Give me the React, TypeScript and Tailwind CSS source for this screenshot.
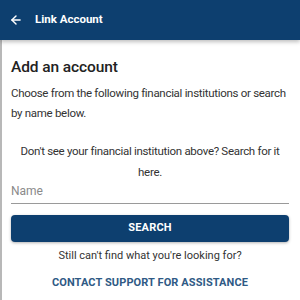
import { ArrowLeft } from 'lucide-react';

export default function App() {
    return (
        <div className="w-[300px] h-[300px] overflow-hidden bg-white flex flex-col" style={{ fontFamily: 'Roboto, "Liberation Sans", sans-serif' }}>
            <div className="h-[40px] shrink-0 bg-[#0d3f6f] flex items-center pl-[9px] gap-[12px] shadow-[0_2px_4px_rgba(0,0,0,0.25)] relative z-10">
                <ArrowLeft size={14} strokeWidth={2.5} className="text-white" />
                <span className="text-white font-bold text-[11.5px]">Link Account</span>
            </div>
            <div className="flex-1 border-l-2 border-[#b8b8b8] pl-[9px] pr-[11px] pt-[17px] flex flex-col">
                <h1 className="text-[15.5px] leading-[20px] font-medium tracking-[-0.1px] text-[#222]">Add an account</h1>
                <p className="mt-[6px] text-[11.5px] leading-[20px] tracking-[-0.3px] text-[#333]">
                    Choose from the following financial institutions or search by name below.
                </p>
                <p className="mt-[18px] text-[11.5px] leading-[21px] tracking-[-0.3px] text-[#333] text-center px-[8px]">
                    Don't see your financial institution above? Search for it here.
                </p>
                <div className="border-b border-[#9a9a9a] pb-[4px]">
                    <span className="block text-[12px] leading-[16px] text-[#8a8a8a]">Name</span>
                </div>
                <button className="mt-[11px] h-[27px] rounded-[4px] bg-[#0d3f6f] text-white font-bold text-[11px] tracking-[0.2px] shadow-[0_1px_3px_rgba(0,0,0,0.3)]">
                    SEARCH
                </button>
                <p className="mt-[6px] text-center text-[11px] leading-[16px] text-[#333]">Still can't find what you're looking for?</p>
                <p className="mt-[11px] text-center text-[11px] leading-[16px] font-bold text-[#2f5a85] tracking-[0.1px]">CONTACT SUPPORT FOR ASSISTANCE</p>
            </div>
        </div>
    );
}
